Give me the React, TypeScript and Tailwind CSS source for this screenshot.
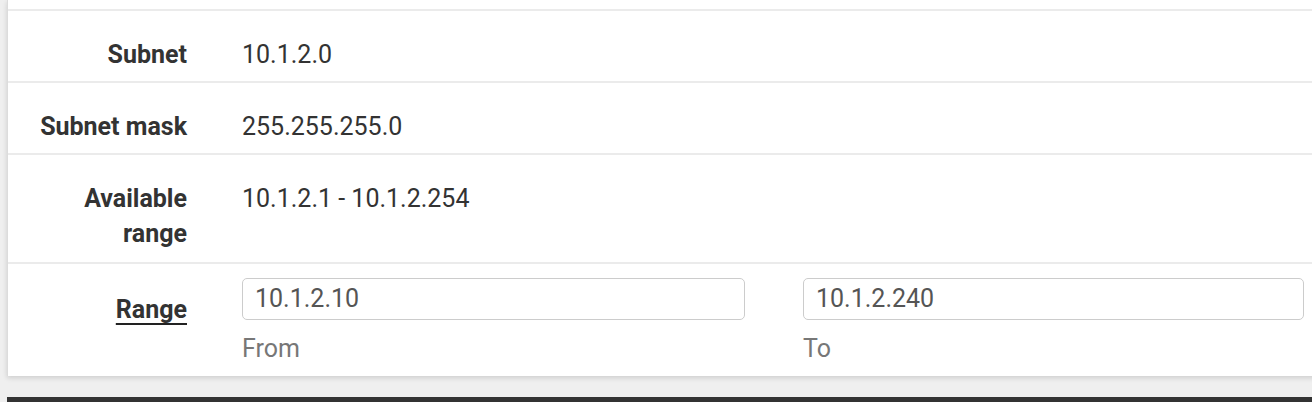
import React from "react";

const font = { fontFamily: "Roboto, 'Liberation Sans', sans-serif" };

function Row({ label, children, className }: { label: React.ReactNode; children: React.ReactNode; className?: string }) {
  return (
    <div className={"flex border-t-2 border-[#ebebeb] " + (className ?? "")}>
      <div className="w-[179px] shrink-0 text-right font-bold text-[#333]">{label}</div>
      <div className="ml-[55px] text-[#333]">{children}</div>
    </div>
  );
}

export default function App() {
  return (
    <div style={font} className="h-[402px] w-[1312px] overflow-hidden bg-[#efefef] pl-[7px] text-[25px] leading-[35px]">
      <div className="w-[1320px] border-l border-[#dcdcdc] bg-white shadow-[0_2px_5px_rgba(0,0,0,0.14)]">
        <div className="h-[9px]" />
        <Row label="Subnet" className="pt-[26px] pb-[9px]">10.1.2.0</Row>
        <Row label="Subnet mask" className="pt-[26px] pb-[9px]">255.255.255.0</Row>
        <Row label={<>Available<br />range</>} className="pt-[26px] pb-[11px]">10.1.2.1 - 10.1.2.254</Row>
        <div className="flex border-t-2 border-[#ebebeb] pt-[14px] pb-[10px]">
          <div className="w-[179px] shrink-0 pt-[14px] text-right font-bold text-[#333]">
            <span className="underline decoration-2 underline-offset-[5px] decoration-[#222]">Range</span>
          </div>
          <div className="ml-[55px] flex gap-[58px]">
            <div className="w-[503px]">
              <div className="h-[42px] rounded-[5px] border border-[#cccccc] px-[12px] leading-[40px] text-[#555]">10.1.2.10</div>
              <div className="mt-[11px] text-[#777]">From</div>
            </div>
            <div className="w-[501px]">
              <div className="h-[42px] rounded-[5px] border border-[#cccccc] px-[12px] leading-[40px] text-[#555]">10.1.2.240</div>
              <div className="mt-[11px] text-[#777]">To</div>
            </div>
          </div>
        </div>
      </div>
      <div className="mt-[21px] h-[40px] w-[1320px] bg-[#333333]" />
    </div>
  );
}
